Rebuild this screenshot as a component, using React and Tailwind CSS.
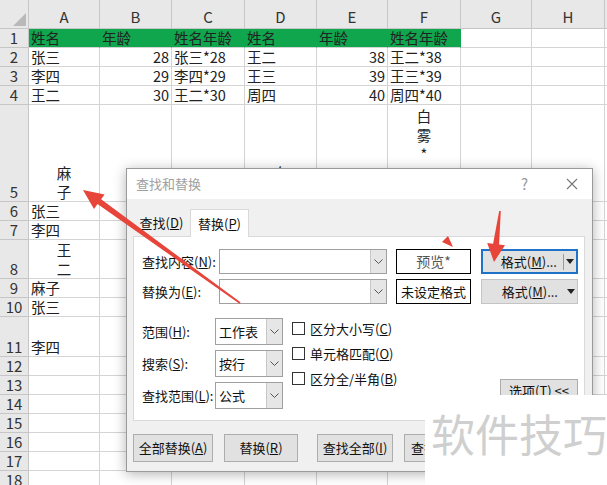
import { useState } from 'react';

const font = { fontFamily: '"Noto Sans CJK SC", "Noto Sans", sans-serif' };

// column widths of the sheet
const cols = [
  'w-[71px]',
  'w-[72px]',
  'w-[73px]',
  'w-[72px]',
  'w-[71px]',
  'w-[73px]',
  'w-[71px]',
  'w-[73px]',
];

const rows = [
  { n: 1, h: 'h-[19px]', green: true, cells: ['姓名', '年龄', '姓名年龄', '姓名', '年龄', '姓名年龄'] },
  { n: 2, h: 'h-[19px]', cells: ['张三', '28', '张三*28', '王二', '38', '王二*38'] },
  { n: 3, h: 'h-[19px]', cells: ['李四', '29', '李四*29', '王三', '39', '王三*39'] },
  { n: 4, h: 'h-[19px]', cells: ['王二', '30', '王二*30', '周四', '40', '周四*40'] },
  { n: 5, h: 'h-[97px]', cells: [{ v: ['麻', '子'] }, '', '', { v: ['白', '雾'] }, '', { v: ['白', '雾', '*', '4', '0'], top: true }] },
  { n: 6, h: 'h-[19px]', cells: ['张三'] },
  { n: 7, h: 'h-[19px]', cells: ['李四'] },
  { n: 8, h: 'h-[39px]', cells: [{ v: ['王', '二'] }] },
  { n: 9, h: 'h-[19px]', cells: ['麻子'] },
  { n: 10, h: 'h-[19px]', cells: ['张三'] },
  { n: 11, h: 'h-[40px]', cells: ['李四'] },
  { n: 12, h: 'h-[19px]', cells: [] },
  { n: 13, h: 'h-[19px]', cells: [] },
  { n: 14, h: 'h-[19px]', cells: [] },
  { n: 15, h: 'h-[19px]', cells: [] },
  { n: 16, h: 'h-[19px]', cells: [] },
  { n: 17, h: 'h-[19px]', cells: [] },
  { n: 18, h: 'h-[19px]', cells: [] },
];

const Cell = ({ width, value, green }) => {
  const isNum = typeof value === 'string' && /^\d+$/.test(value);
  let content = null;
  if (value && typeof value === 'object') {
    content = (
      <div
        className={`flex flex-col items-center w-full h-full leading-[19px] overflow-hidden ${
          value.top ? 'justify-start pt-[1px]' : 'justify-end'
        }`}
      >
        {value.v.map((c, i) => (
          <span key={i}>{c}</span>
        ))}
      </div>
    );
  } else if (value) {
    content = <span className="leading-[18px] whitespace-nowrap">{value}</span>;
  }
  return (
    <div
      className={`${width} shrink-0 h-full border-r border-b border-[#d4d4d4] flex items-end px-[2px] text-[14.5px] ${
        isNum ? 'justify-end' : 'justify-start'
      } ${green ? 'bg-[#10a64e] border-r-[#10a64e]' : 'bg-white'}`}
    >
      {content}
    </div>
  );
};

const Sheet = () => (
  <div className="flex flex-col w-[607px] h-[485px] overflow-hidden bg-white text-[#222]" style={font}>
    {/* column header */}
    <div className="flex h-[29px] shrink-0 bg-[#e8e8e8]">
      <div className="w-[29px] shrink-0 h-full border-r border-b border-[#c6c6c6] relative">
        <div className="absolute right-[2px] bottom-[2px] w-0 h-0 border-l-[13px] border-l-transparent border-b-[13px] border-b-[#b9b9b9]" />
      </div>
      {['A', 'B', 'C', 'D', 'E', 'F', 'G', 'H'].map((l, i) => (
        <div
          key={l}
          className={`${cols[i]} shrink-0 h-full border-r border-b border-[#c6c6c6] flex items-end justify-center pb-[2px] text-[15px] text-[#333] leading-[18px]`}
        >
          {l}
        </div>
      ))}
      <div className="flex-1 border-b border-[#c6c6c6]" />
    </div>
    {rows.map((r) => (
      <div key={r.n} className={`flex shrink-0 ${r.h}`}>
        <div className="w-[29px] shrink-0 h-full bg-[#e8e8e8] border-r border-b border-[#c6c6c6] flex items-end justify-center text-[15px] text-[#333] leading-[18px]">
          {r.n}
        </div>
        {cols.map((w, i) => (
          <Cell key={i} width={w} value={r.cells[i]} green={r.green && i < 6} />
        ))}
        <div className="flex-1 h-full border-b border-[#d4d4d4]" />
      </div>
    ))}
  </div>
);

const Chevron = () => (
  <svg width="9" height="6" viewBox="0 0 9 6">
    <polyline points="0.5,0.5 4.5,4.5 8.5,0.5" fill="none" stroke="#555" strokeWidth="1" />
  </svg>
);

const Combo = ({ width }) => (
  <div className={`${width} h-[25px] border border-[#a0a0a0] bg-white flex shrink-0`}>
    <div className="flex-1" />
    <div className="w-[16px] h-full bg-[#e6e6e6] border-l border-[#c8c8c8] flex items-center justify-center">
      <Chevron />
    </div>
  </div>
);

const Select = ({ text }) => (
  <div className="w-[68px] h-[27px] border border-[#a0a0a0] bg-white flex shrink-0">
    <div className="flex-1 flex items-center pl-[3px]">{text}</div>
    <div className="w-[16px] h-full bg-[#e6e6e6] border-l border-[#c8c8c8] flex items-center justify-center">
      <Chevron />
    </div>
  </div>
);

const Check = ({ children }) => (
  <div className="flex items-center h-[25px] gap-[5px] whitespace-nowrap">
    <div className="w-[13px] h-[13px] border border-[#333] bg-white" />
    <span>{children}</span>
  </div>
);

const FormatBtn = ({ focused }) => (
  <div
    className={`w-[97px] h-[25px] bg-[#e1e1e1] flex items-center whitespace-nowrap ${
      focused ? 'border-2 border-[#1e73c8]' : 'border border-[#c4c4c4]'
    }`}
  >
    <div className="flex-1 flex justify-end pr-[6px]">
      格式(<u>M</u>)...
    </div>
    <div className={`h-[16px] border-l ${focused ? 'border-[#9a9a9a]' : 'border-transparent'}`} />
    <div className="w-[12px] flex justify-center">
      <svg width="8" height="5" viewBox="0 0 8 5">
        <polygon points="0,0 8,0 4,5" fill="#222" />
      </svg>
    </div>
  </div>
);

const Btn = ({ width, children }) => (
  <div
    className={`${width} h-[28px] bg-[#e1e1e1] border border-[#adadad] flex items-center justify-center shrink-0 whitespace-nowrap overflow-hidden`}
  >
    {children}
  </div>
);

const Dialog = () => (
  <div
    className="absolute left-[126px] top-[168px] w-[467px] h-[304px] bg-[#f0f0f0] border border-[#9a9a9a] shadow-[0_2px_12px_rgba(0,0,0,0.3)] flex flex-col text-[13px] text-[#111] whitespace-nowrap"
    style={font}
  >
    <div className="h-[30px] bg-white flex items-center pl-[9px] pr-[14px] shrink-0">
      <span className="text-[#a0a0a0]">查找和替换</span>
      <span className="ml-auto text-[#9a9a9a] text-[15px] mr-[38px]">?</span>
      <svg width="12" height="12" viewBox="0 0 12 12">
        <path d="M1 1 L11 11 M11 1 L1 11" stroke="#777" strokeWidth="1.1" />
      </svg>
    </div>
    <div className="flex-1 px-[6px] pt-[9px] flex flex-col">
      <div className="flex items-end h-[28px]">
        <div className="w-[57px] h-[26px] flex items-center justify-center">
          查找(<u>D</u>)
        </div>
        <div className="w-[59px] h-[28px] bg-white border border-b-0 border-[#d9d9d9] flex items-center justify-center relative z-10 -mb-[1px]">
          替换(<u>P</u>)
        </div>
      </div>
      <div className="w-[452px] h-[185px] bg-white border border-[#d9d9d9] pl-[8px] pr-[6px] pt-[12px] flex flex-col">
        <div className="flex items-center h-[25px]">
          <span className="w-[77px] shrink-0">
            查找内容(<u>N</u>):
          </span>
          <Combo width="w-[168px]" />
          <div className="w-[75px] h-[25px] ml-[9px] shrink-0 border border-black flex items-center justify-center text-[#555] text-[14px]">
            预览*
          </div>
          <div className="ml-[10px]">
            <FormatBtn focused />
          </div>
        </div>
        <div className="flex items-center h-[25px] mt-[5px]">
          <span className="w-[77px] shrink-0">
            替换为(<u>E</u>):
          </span>
          <Combo width="w-[168px]" />
          <div className="w-[75px] h-[25px] ml-[9px] shrink-0 border border-black flex items-center justify-center">
            未设定格式
          </div>
          <div className="ml-[10px]">
            <FormatBtn />
          </div>
        </div>
        <div className="flex mt-[14px]">
          <div className="flex flex-col gap-[5px]">
            <div className="flex items-center">
              <span className="w-[73px] shrink-0">
                范围(<u>H</u>):
              </span>
              <Select text="工作表" />
            </div>
            <div className="flex items-center">
              <span className="w-[73px] shrink-0">
                搜索(<u>S</u>):
              </span>
              <Select text="按行" />
            </div>
            <div className="flex items-center">
              <span className="w-[73px] shrink-0">
                查找范围(<u>L</u>):
              </span>
              <Select text="公式" />
            </div>
          </div>
          <div className="flex flex-col ml-[9px] -mt-[2px]">
            <Check>
              区分大小写(<u>C</u>)
            </Check>
            <Check>
              单元格匹配(<u>O</u>)
            </Check>
            <Check>
              区分全/半角(<u>B</u>)
            </Check>
          </div>
          <div className="flex-1 flex items-end justify-end pb-[6px]">
            <div className="w-[78px] h-[24px] bg-[#e1e1e1] border border-[#adadad] flex items-center justify-center">
              选项(<u>T</u>) &lt;&lt;
            </div>
          </div>
        </div>
      </div>
      <div className="flex mt-[13px] gap-[11px]">
        <Btn width="w-[80px]">
          全部替换(<u>A</u>)
        </Btn>
        <Btn width="w-[74px]">
          替换(<u>R</u>)
        </Btn>
        <div className="ml-[8px]">
          <Btn width="w-[76px]">
            查找全部(<u>I</u>)
          </Btn>
        </div>
        {/* only the left end of this button shows past the watermark */}
        <div className="w-[22px] overflow-hidden shrink-0">
          <div className="w-[90px] h-[28px] bg-[#e1e1e1] border border-[#adadad] flex items-center pl-[6px]">
            查找下一个(<u>F</u>)
          </div>
        </div>
      </div>
    </div>
  </div>
);

const Arrows = () => (
  <svg className="absolute left-0 top-0 pointer-events-none" width="607" height="485" viewBox="0 0 607 485">
    <polygon
      points="83,190 104.6,194.4 101.1,199.3 240.5,302.3 239.5,303.7 97.5,204.1 94,209"
      fill="#e8453a"
    />
    <polygon
      points="494,262 487.2,243 493.1,243.8 499.2,210.9 500.8,211.1 499.1,244.5 505,245.2"
      fill="#e8453a"
    />
    <polygon points="442,242 448,236 453,247" fill="#e8453a" />
  </svg>
);

const App = () => {
  const [show] = useState(true);
  return (
    <div className="relative w-[607px] h-[485px] overflow-hidden bg-white">
      <Sheet />
      {show && <Dialog />}
      <Arrows />
      <div
        className="absolute left-[425px] top-[395px] w-[182px] h-[90px] bg-white flex items-start pl-[6px] pt-[12px] text-[44px] leading-[52px] text-[#cfcfcf]"
        style={font}
      >
        软件技巧
      </div>
    </div>
  );
};

export default App;
